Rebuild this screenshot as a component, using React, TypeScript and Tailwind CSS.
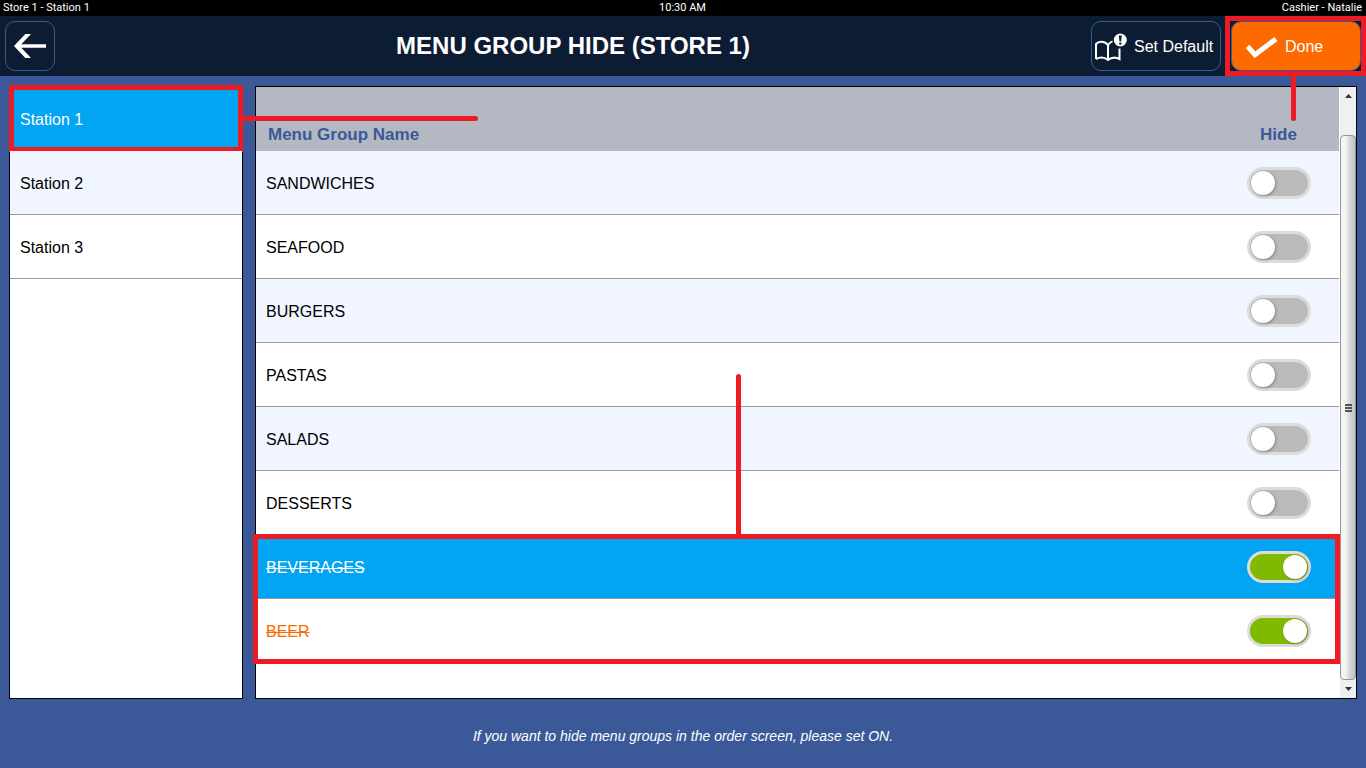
import { useState } from "react";

type MenuGroup = { name: string; hidden: boolean };

const stations = ["Station 1", "Station 2", "Station 3"];

const initialGroups: MenuGroup[] = [
  { name: "SANDWICHES", hidden: false },
  { name: "SEAFOOD", hidden: false },
  { name: "BURGERS", hidden: false },
  { name: "PASTAS", hidden: false },
  { name: "SALADS", hidden: false },
  { name: "DESSERTS", hidden: false },
  { name: "BEVERAGES", hidden: true },
  { name: "BEER", hidden: true },
];

const SELECTED_GROUP = "BEVERAGES";

function BackIcon() {
  return (
    <svg viewBox="0 0 34 26" className="h-[26px] w-[34px]" fill="none" aria-hidden="true">
      <path
        d="M1 13L12.3 1H18L8.3 11.2H33V14.8H8.3L18 25H12.3Z"
        fill="#fff"
      />
    </svg>
  );
}

function BookAlertIcon() {
  return (
    <svg viewBox="0 0 34 30" className="h-[30px] w-[34px]" fill="none" aria-hidden="true">
      <path
        d="M2 27V12C4.5 9 10.5 8.8 14 13C15.4 10.9 17 9.8 18.5 9.4M14 13V27.5M2 27C5.6 25.2 10.5 25.2 14 28C17.5 25.2 22 25.2 25.5 27V16.5"
        stroke="#fff"
        strokeWidth="2"
      />
      <circle cx="26.3" cy="8" r="6.5" fill="#fff" />
      <path d="M24.8 3.4H27.8L27.1 9.4H25.5Z" fill="#0c1c33" />
      <circle cx="26.3" cy="11.6" r="1.2" fill="#0c1c33" />
    </svg>
  );
}

function CheckIcon() {
  return (
    <svg viewBox="0 0 32 22" className="h-[22px] w-8" fill="none" aria-hidden="true">
      <path d="M1.5 10.5L9 18.7L30 3" stroke="#fff" strokeWidth="5" />
    </svg>
  );
}

function GroupRow({
  group,
  striped,
  onToggle,
}: {
  group: MenuGroup;
  striped: boolean;
  onToggle: () => void;
}) {
  const selected = group.name === SELECTED_GROUP;
  const rowColor = selected ? "bg-[#03a4f1]" : striped ? "bg-[#f0f5ff]" : "bg-white";
  const textColor = selected ? "text-white" : group.hidden ? "text-[#fd6a00]" : "text-black";
  const id = `hide-${group.name.toLowerCase()}`;
  return (
    <tr className={rowColor}>
      <td className="h-16 border-b border-[#999] px-2.5 pt-0.5 pb-0">
        <label htmlFor={id} className={`${textColor} ${group.hidden ? "line-through" : ""}`}>
          {group.name}
        </label>
      </td>
      <td className="h-16 w-[121px] border-b border-[#999] p-0">
        <input
          id={id}
          type="checkbox"
          role="switch"
          checked={group.hidden}
          onChange={onToggle}
          className="mx-auto block h-8 w-16 cursor-pointer appearance-none rounded-full border-3 border-[#dcdcdc] bg-[#bababa] px-px py-px before:block before:size-6 before:rounded-full before:bg-white before:shadow-[1px_1px_3px_rgba(0,0,0,0.3)] checked:bg-[#7fba00] checked:before:ml-8"
        />
      </td>
    </tr>
  );
}

function ScrollBar() {
  return (
    <div className="ml-px flex w-4 shrink-0 flex-col bg-[#f0f0f0]" aria-hidden="true">
      <div className="flex h-12 justify-center pt-[7px]">
        <svg viewBox="0 0 7 4" className="h-1 w-[7px]">
          <path d="M0 4L3.5 0L7 4Z" fill="#333" />
        </svg>
      </div>
      <div className="flex flex-1 items-center justify-center rounded-sm border border-[#979797] bg-linear-to-r from-[#f5f5f5] from-30% via-[#d8d8da] via-60% to-[#c0c0c6]">
        <div className="flex flex-col gap-px">
          <span className="h-0.5 w-[7px] bg-[#555]" />
          <span className="h-0.5 w-[7px] bg-[#555]" />
          <span className="h-0.5 w-[7px] bg-[#555]" />
        </div>
      </div>
      <div className="flex h-[18px] items-center justify-center">
        <svg viewBox="0 0 7 4" className="h-1 w-[7px]">
          <path d="M0 0H7L3.5 4Z" fill="#333" />
        </svg>
      </div>
    </div>
  );
}

export default function App() {
  const [groups, setGroups] = useState(initialGroups);
  const [station, setStation] = useState("Station 1");

  const toggle = (name: string) =>
    setGroups((list) => list.map((g) => (g.name === name ? { ...g, hidden: !g.hidden } : g)));

  const renderRow = (g: MenuGroup, i: number) => (
    <GroupRow key={g.name} group={g} striped={i % 2 === 0} onToggle={() => toggle(g.name)} />
  );

  return (
    <div className="flex min-h-screen flex-col bg-[#3b5998] font-['Liberation_Sans',Arial,sans-serif] text-base text-black">
      <div className="grid h-4 grid-cols-3 bg-black pr-1 pl-[3px] font-[Roboto,'Liberation_Sans',sans-serif] text-[11px] leading-4 text-white">
        <span>Store 1 - Station 1</span>
        <span className="text-center">10:30 AM</span>
        <span className="text-right">Cashier - Natalie</span>
      </div>

      <header className="flex h-15 items-center bg-[#0c1c33] px-[5px] text-white">
        <button
          type="button"
          aria-label="Back"
          className="flex size-[50px] items-center justify-center rounded-[10px] border border-[#3a5a8c]"
        >
          <BackIcon />
        </button>
        <h1 className="flex-1 text-center text-2xl font-bold">MENU GROUP HIDE (STORE 1)</h1>
        <div className="flex gap-2.5">
          <button
            type="button"
            className="flex h-[50px] w-[130px] items-center gap-1.5 rounded-[10px] border border-[#3a5a8c] pt-0.5 pl-0.5"
          >
            <BookAlertIcon />
            Set Default
          </button>
          <div className="relative">
            <button
              type="button"
              className="flex h-[50px] w-[130px] items-center gap-[7px] rounded-[10px] border border-[#3a5a8c] bg-[#fd6a00] pt-0.5 pl-3.5"
            >
              <CheckIcon />
              Done
            </button>
            <span className="pointer-events-none absolute -inset-y-[5px] -right-[5px] -left-1.5 border-5 border-[#ed1c24]" />
            <span className="pointer-events-none absolute top-[55px] left-[60px] z-10 h-[45px] w-[5px] rounded-b-sm bg-[#ed1c24]" />
          </div>
        </div>
      </header>

      <main className="flex flex-1 gap-3 px-[9px] pt-2.5">
        <nav className="w-[234px] shrink-0 border border-black bg-white" aria-label="Stations">
          {stations.map((name, i) => (
            <div key={name} className="relative">
              <button
                type="button"
                onClick={() => setStation(name)}
                className={`block h-16 w-full border-b border-[#999] px-2.5 pt-0.5 text-left ${
                  station === name
                    ? "bg-[#03a4f1] text-white"
                    : i % 2 === 1
                      ? "bg-[#f0f5ff]"
                      : "bg-white"
                }`}
              >
                {name}
              </button>
              {i === 0 && (
                <>
                  <span className="pointer-events-none absolute -inset-x-px -top-0.5 -bottom-px border-5 border-[#ed1c24]" />
                  <span className="pointer-events-none absolute top-[29px] left-full z-10 h-[5px] w-[236px] rounded-r-sm bg-[#ed1c24]" />
                </>
              )}
            </div>
          ))}
        </nav>

        <section className="flex flex-1 border border-black bg-white">
          <div className="flex-1">
            <table className="w-full border-separate border-spacing-0">
              <thead>
                <tr className="bg-[#b4b8c3] text-[17px] leading-6 text-[#3b5998]">
                  <th scope="col" className="h-16 px-3 pt-0 pb-1 text-left align-bottom">
                    Menu Group Name
                  </th>
                  <th scope="col" className="h-16 w-[121px] px-0 pt-0 pb-1 text-center align-bottom">
                    Hide
                  </th>
                </tr>
              </thead>
              <tbody>{groups.slice(0, 6).map(renderRow)}</tbody>
            </table>
            <div className="relative">
              <table className="w-full border-separate border-spacing-0">
                <tbody>{groups.slice(6).map(renderRow)}</tbody>
              </table>
              <span className="pointer-events-none absolute -top-px -right-px -bottom-px -left-[3px] border-5 border-[#ed1c24]" />
              <span className="pointer-events-none absolute bottom-full left-[480px] h-[161px] w-[5px] rounded-t-sm bg-[#ed1c24]" />
            </div>
          </div>
          <ScrollBar />
        </section>
      </main>

      <footer className="flex h-[69px] items-center justify-center pb-2">
        <p className="pt-3 text-sm text-white italic">
          If you want to hide menu groups in the order screen, please set ON.
        </p>
      </footer>
    </div>
  );
}
